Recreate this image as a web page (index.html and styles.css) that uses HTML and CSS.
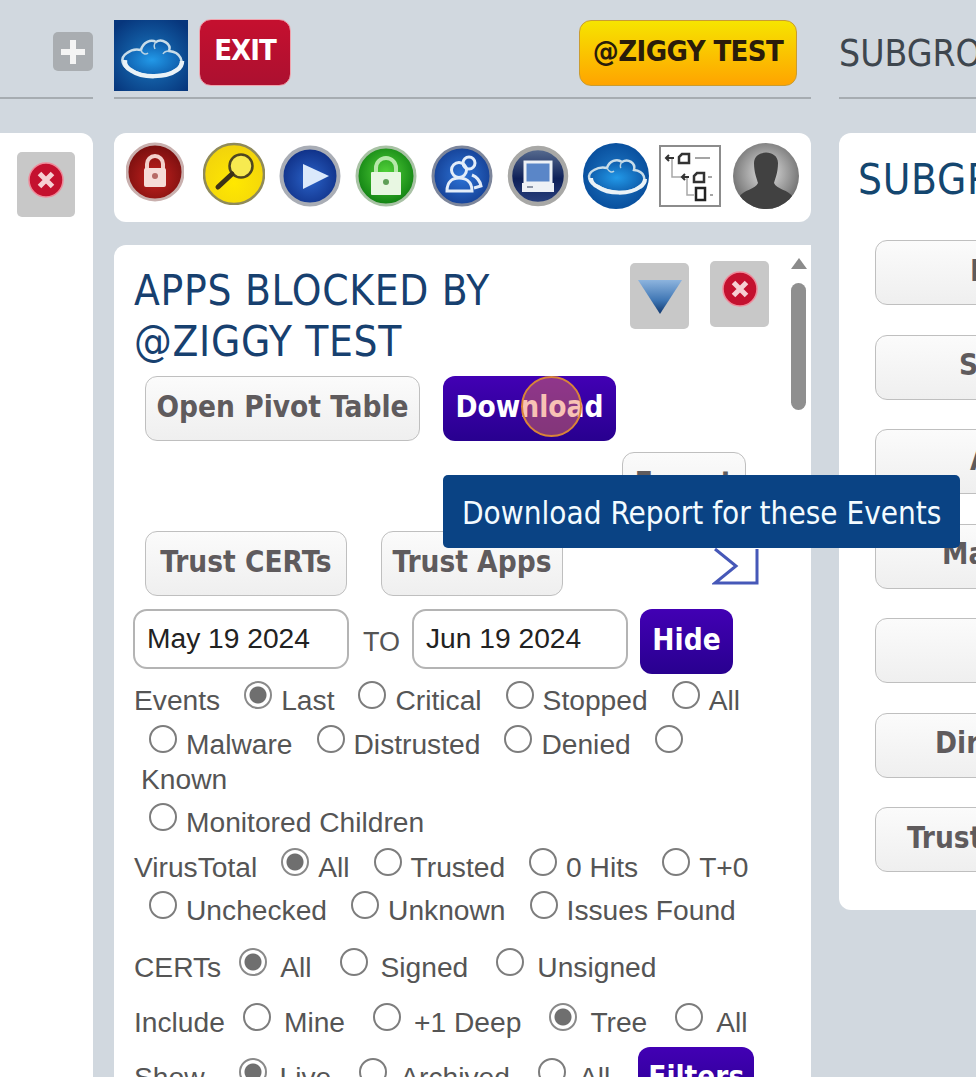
FILE: index.html
```html
<!DOCTYPE html>
<html lang="en">
<head>
  <meta charset="UTF-8">
  <title>Apps blocked</title>
  <link rel="stylesheet" href="styles.css">
</head>
<body>
  <div class="page">

    <div class="col col-left">
      <div class="col-head head-left">
        <div class="plus-btn">
          <svg width="26" height="26" viewBox="0 0 26 26"><path d="M13 1v24M1 13h24" stroke="#f4f4f4" stroke-width="6"/></svg>
        </div>
      </div>
      <div class="card card-left">
        <div class="close-btn">
          <svg width="36" height="36" viewBox="0 0 36 36"><circle cx="18" cy="18" r="17" fill="#c4112f" stroke="#ef8b9b" stroke-width="1.5"/><path d="M11.500 11.500l13 13M24.500 11.500l-13 13" stroke="#f6cfd3" stroke-width="5"/></svg>
        </div>
      </div>
    </div>

    <div class="col col-mid">
      <div class="col-head head-mid">
        <svg class="logo" width="74" height="71" viewBox="0 0 74 71">
          <defs>
            <radialGradient id="logoBg" cx="50%" cy="55%" r="65%"><stop offset="0" stop-color="#1a78c0"/><stop offset="1" stop-color="#07367c"/></radialGradient>
            <radialGradient id="logoCloud" cx="50%" cy="55%" r="50%"><stop offset="0" stop-color="#2299e8"/><stop offset="1" stop-color="#0f5fae"/></radialGradient>
          </defs>
          <rect width="74" height="71" fill="url(#logoBg)"/>
          <path d="M18 50C8 48 5 38 13 33C18 29 23 29 27 30C29 22 37 19 42 22C48 18 58 24 55 31C66 32 72 42 63 49C52 58 28 57 18 50Z" fill="url(#logoCloud)" stroke="#c9dde9" stroke-width="2.500"/>
          <path d="M27 30c1 4 5 5 7 3M42 22c-2 2-2 5-1 7M55 31c-3 0-5 1-6 3" fill="none" stroke="#b9d3e3" stroke-width="1.500"/>
          <path d="M11 40C10 46 14 49 18 51C28 58 52 58 63 50C66 48 68 45 68 41" fill="none" stroke="#eaf2f7" stroke-width="4.500"/>
        </svg>
        <div class="exit-btn">EXIT</div>
        <div class="user-btn">@ZIGGY TEST</div>
      </div>

      <div class="card toolbar">
        <svg class="tool tool-lock" width="58" height="60" viewBox="0 0 58 60">
          <defs><radialGradient id="redBall" cx="50%" cy="60%" r="55%"><stop offset="0" stop-color="#c5211f"/><stop offset="1" stop-color="#7c100f"/></radialGradient></defs>
          <circle cx="29" cy="30" r="28" fill="url(#redBall)" stroke="#c9b0ae" stroke-width="3"/>
          <path d="M21 27v-5a8 8 0 0 1 16 0v5" fill="none" stroke="#f3d0cb" stroke-width="4"/>
          <rect x="18" y="26" width="22" height="19" rx="2" fill="#f6dcd8"/>
          <circle cx="29" cy="34" r="3" fill="#b76a66"/>
        </svg>
        <svg class="tool tool-search" width="62" height="63" viewBox="0 0 62 63">
          <defs><radialGradient id="yellowBall" cx="50%" cy="65%" r="60%"><stop offset="0" stop-color="#ffe800"/><stop offset="1" stop-color="#f2d40c"/></radialGradient></defs>
          <circle cx="31" cy="32" r="30" fill="url(#yellowBall)" stroke="#8f8a5a" stroke-width="2.500"/>
          <circle cx="38" cy="24" r="11.500" fill="#f7ea50" stroke="#4e4620" stroke-width="2.500"/>
          <path d="M29 32L15 45" stroke="#3c3216" stroke-width="5" stroke-linecap="round"/>
        </svg>
        <svg class="tool" width="62" height="62" viewBox="0 0 62 62">
          <defs><radialGradient id="blueBall" cx="50%" cy="55%" r="55%"><stop offset="0" stop-color="#2a62c8"/><stop offset="1" stop-color="#0f2f85"/></radialGradient></defs>
          <circle cx="31" cy="31" r="28.500" fill="url(#blueBall)" stroke="#a9adb5" stroke-width="4"/>
          <path d="M24 19L50 31L24 44Z" fill="#dbe9fb"/>
        </svg>
        <svg class="tool" width="62" height="62" viewBox="0 0 62 62">
          <defs><radialGradient id="greenBall" cx="50%" cy="45%" r="55%"><stop offset="0" stop-color="#53d33a"/><stop offset="1" stop-color="#108012"/></radialGradient></defs>
          <circle cx="31" cy="31" r="29" fill="url(#greenBall)" stroke="#a9c2a5" stroke-width="3"/>
          <path d="M21 28v-5a10 10 0 0 1 20 0v5" fill="none" stroke="#b7e8aa" stroke-width="4"/>
          <rect x="16" y="27" width="30" height="23" rx="1" fill="#e8f7e2"/>
          <circle cx="31" cy="37" r="3" fill="#5f9f58"/>
        </svg>
        <svg class="tool" width="62" height="62" viewBox="0 0 62 62">
          <defs><radialGradient id="peopleBall" cx="50%" cy="50%" r="55%"><stop offset="0" stop-color="#2d74d8"/><stop offset="1" stop-color="#143e92"/></radialGradient></defs>
          <circle cx="31" cy="31" r="29" fill="url(#peopleBall)" stroke="#7d869b" stroke-width="3"/>
          <circle cx="28" cy="25" r="7.500" fill="none" stroke="#e3edf9" stroke-width="3"/>
          <circle cx="38" cy="18" r="6" fill="none" stroke="#e3edf9" stroke-width="3"/>
          <path d="M16 46c0-10 6-13 12-13s13 3 13 13z" fill="none" stroke="#e3edf9" stroke-width="3"/>
          <path d="M41 30c5 2 8 6 9 11l-7 2" fill="none" stroke="#e3edf9" stroke-width="3"/>
        </svg>
        <svg class="tool" width="62" height="62" viewBox="0 0 62 62">
          <defs><linearGradient id="laptopBall" x1="0" y1="0" x2="0" y2="1"><stop offset="0" stop-color="#5b6f92"/><stop offset=".55" stop-color="#0e2058"/><stop offset="1" stop-color="#2b427f"/></linearGradient></defs>
          <circle cx="31" cy="31" r="28" fill="url(#laptopBall)" stroke="#a8a8a6" stroke-width="4.500"/>
          <rect x="18" y="17" width="26" height="21" fill="#5a86c8" stroke="#eef1f6" stroke-width="3"/>
          <path d="M15 38h32v9H15z" fill="#eef1f6"/>
          <path d="M20 42h6" stroke="#8d96a8" stroke-width="2"/>
        </svg>
        <svg class="tool" width="66" height="66" viewBox="0 0 66 66">
          <defs>
            <radialGradient id="cloudBall" cx="50%" cy="50%" r="55%"><stop offset="0" stop-color="#1f7ac8"/><stop offset="1" stop-color="#074c9a"/></radialGradient>
            <radialGradient id="cloudFill" cx="50%" cy="55%" r="50%"><stop offset="0" stop-color="#2299e8"/><stop offset="1" stop-color="#0f5fae"/></radialGradient>
          </defs>
          <circle cx="33" cy="33" r="33" fill="url(#cloudBall)"/>
          <path d="M15 43C5 41 3 31 11 27C16 24 20 24 24 25C26 18 34 15 39 19C45 15 53 20 51 27C61 28 65 37 57 43C46 52 25 50 15 43Z" fill="url(#cloudFill)" stroke="#c9dde9" stroke-width="2.500"/>
          <path d="M24 25c2 4 5 5 7 3M39 19c-2 2-2 5-1 6" fill="none" stroke="#b9d3e3" stroke-width="1.500"/>
          <path d="M8 35C8 40 11 42 15 44C25 51 46 52 57 44C60 42 62 39 62 36" fill="none" stroke="#eaf2f7" stroke-width="4"/>
        </svg>
        <svg class="tool tool-tree" width="62" height="62" viewBox="0 0 62 62">
          <rect x="1" y="1" width="60" height="60" fill="#fff" stroke="#8c8c8c" stroke-width="2"/>
          <path d="M13 13v19h10M28 32v18h7" fill="none" stroke="#a8a8a8" stroke-width="1.500"/>
          <path d="M7 13h8M10 10l-3 3 3 3M23 32h7M26 29l-3 3 3 3" fill="none" stroke="#333" stroke-width="2"/>
          <path d="M20 18v-6l3-3h7v9zM35 37v-6l3-3h7v9z" fill="#fff" stroke="#333" stroke-width="2.500"/>
          <rect x="37" y="43" width="9" height="12" fill="#fff" stroke="#222" stroke-width="2.500"/>
          <path d="M36 13h15M49 32h4M51 50h3" stroke="#888" stroke-width="1.500"/>
        </svg>
        <svg class="tool tool-avatar" width="66" height="66" viewBox="0 0 66 66">
          <defs>
            <radialGradient id="avatarBall" cx="50%" cy="45%" r="55%"><stop offset="0" stop-color="#e4e4e4"/><stop offset="1" stop-color="#6f6f6f"/></radialGradient>
            <clipPath id="avatarClip"><circle cx="33" cy="33" r="33"/></clipPath>
          </defs>
          <circle cx="33" cy="33" r="33" fill="url(#avatarBall)"/>
          <path clip-path="url(#avatarClip)" d="M21 20C21 6 45 6 45 20C45 30 42 36 41 40C43 46 56 47 60 54L60 66H6L6 54C10 47 23 46 25 40C24 36 21 30 21 20Z" fill="#414141"/>
        </svg>
      </div>

      <div class="card panel">
        <div class="panel-head">
          <h2 class="panel-title">APPS BLOCKED BY @ZIGGY TEST</h2>
          <div class="square-btn square-sort">
            <svg width="46" height="38" viewBox="0 0 46 38">
              <defs><linearGradient id="sortFill" x1="0" y1="0" x2="0" y2="1"><stop offset="0" stop-color="#8db4de"/><stop offset=".6" stop-color="#3f76b4"/><stop offset="1" stop-color="#10386f"/></linearGradient></defs>
              <path d="M1 3H45L23 37Z" fill="url(#sortFill)"/>
            </svg>
          </div>
          <div class="square-btn square-close">
            <svg width="36" height="36" viewBox="0 0 36 36"><circle cx="18" cy="18" r="17" fill="#c4112f" stroke="#ef8b9b" stroke-width="1.500"/><path d="M11.500 11.500l13 13M24.500 11.500l-13 13" stroke="#f6cfd3" stroke-width="5"/></svg>
          </div>
        </div>

        <div class="btn-row">
          <div class="btn btn-pivot">Open Pivot Table</div>
          <div class="btn btn-purple btn-download">Download</div>
        </div>
        <div class="btn-row btn-row-export">
          <div class="btn btn-export">Export</div>
        </div>
        <div class="btn-row btn-row-trust">
          <div class="btn btn-certs">Trust CERTs</div>
          <div class="btn btn-apps">Trust Apps</div>
          <svg class="sigma" width="48" height="40" viewBox="0 0 48 40"><path d="M45 2V36H3L24 19L3 2" fill="none" stroke="#4658b8" stroke-width="3"/></svg>
        </div>

        <div class="date-row">
          <div class="date-box">May 19 2024</div>
          <span class="date-to">TO</span>
          <div class="date-box">Jun 19 2024</div>
          <div class="btn btn-purple btn-hide">Hide</div>
        </div>

        <div class="row">
          <span class="row-label">Events</span>
          <label class="opt"><i class="radio on"></i>Last</label>
          <label class="opt"><i class="radio"></i>Critical</label>
          <label class="opt"><i class="radio"></i>Stopped</label>
          <label class="opt"><i class="radio"></i>All</label>
        </div>
        <div class="row row-indent">
          <label class="opt"><i class="radio"></i>Malware</label>
          <label class="opt"><i class="radio"></i>Distrusted</label>
          <label class="opt"><i class="radio"></i>Denied</label>
          <label class="opt"><i class="radio"></i></label>
        </div>
        <div class="row-known">Known</div>
        <div class="row row-indent row-monitored">
          <label class="opt"><i class="radio"></i>Monitored Children</label>
        </div>
        <div class="row row-vt">
          <span class="row-label">VirusTotal</span>
          <label class="opt"><i class="radio on"></i>All</label>
          <label class="opt"><i class="radio"></i>Trusted</label>
          <label class="opt"><i class="radio"></i>0 Hits</label>
          <label class="opt"><i class="radio"></i>T+0</label>
        </div>
        <div class="row row-indent row-vt2">
          <label class="opt"><i class="radio"></i>Unchecked</label>
          <label class="opt"><i class="radio"></i>Unknown</label>
          <label class="opt"><i class="radio"></i>Issues Found</label>
        </div>
        <div class="row row-wide row-certs">
          <span class="row-label">CERTs</span>
          <label class="opt"><i class="radio on"></i>All</label>
          <label class="opt"><i class="radio"></i>Signed</label>
          <label class="opt"><i class="radio"></i>Unsigned</label>
        </div>
        <div class="row row-wide row-include">
          <span class="row-label">Include</span>
          <label class="opt"><i class="radio"></i>Mine</label>
          <label class="opt"><i class="radio"></i>+1 Deep</label>
          <label class="opt"><i class="radio on"></i>Tree</label>
          <label class="opt"><i class="radio"></i>All</label>
        </div>
        <div class="row row-wide row-show">
          <span class="row-label">Show</span>
          <label class="opt"><i class="radio on"></i>Live</label>
          <label class="opt"><i class="radio"></i>Archived</label>
          <label class="opt"><i class="radio"></i>All</label>
          <div class="btn btn-purple btn-filters">Filters</div>
        </div>

        <div class="scroll-arrow"></div>
        <div class="scroll-thumb"></div>
      </div>
    </div>

    <div class="col col-right">
      <div class="col-head head-right">SUBGROUPS</div>
      <div class="card card-right">
        <h2 class="right-title">SUBGROUPS</h2>
        <div class="btn side-btn side-1">L</div>
        <div class="btn side-btn side-2">S</div>
        <div class="btn side-btn side-1">A</div>
        <div class="btn side-btn side-4">Ma</div>
        <div class="btn side-btn"></div>
        <div class="btn side-btn side-6">Dir</div>
        <div class="btn side-btn side-7">Trust</div>
      </div>
    </div>
  </div>

  <div class="tooltip">Download Report for these Events</div>
  <div class="click-mark"></div>
</body>
</html>
```

FILE: styles.css
```css
* {
  padding: 0;
  margin: 0;
  box-sizing: border-box;
}
html,
body {
  height: 1077px;
  overflow: hidden;
}
body {
  position: relative;
  background-color: #d1d8df;
  font-family: "Liberation Sans", Arial, sans-serif;
  font-size: 28.2px;
  color: #555;
}
.page {
  display: flex;
  width: 1300px;
}
.col-left {
  width: 93px;
  margin-right: 21px;
}
.col-mid {
  width: 697px;
  margin-right: 28px;
}
.col-right {
  width: 400px;
}
.col-head {
  height: 99px;
  border-bottom: 2px solid #a6acb1;
  margin-bottom: 34px;
}
.card {
  background-color: #fff;
}

/* top bars */
.head-left {
  display: flex;
  justify-content: flex-end;
  padding-top: 32px;
}
.plus-btn {
  display: flex;
  align-items: center;
  justify-content: center;
  width: 40px;
  height: 39px;
  background-color: #a9adb1;
  border-radius: 5px;
}
.head-mid {
  display: flex;
  align-items: flex-start;
  padding-top: 20px;
}
.exit-btn {
  display: flex;
  align-items: center;
  justify-content: center;
  width: 92px;
  height: 67px;
  margin: -1px 0 0 11px;
  padding-bottom: 5px;
  border: 1px solid #f0a3ad;
  border-radius: 12px;
  background: linear-gradient(#c5102f, #ac1030);
  color: #fff;
  font: bold 29px "DejaVu Sans Condensed", "DejaVu Sans", sans-serif;
  letter-spacing: -1px;
}
.user-btn {
  display: flex;
  align-items: center;
  justify-content: center;
  width: 218px;
  height: 66px;
  margin-left: auto;
  margin-right: 14px;
  padding-bottom: 4px;
  border: 1px solid #c99c32;
  border-radius: 12px;
  background: linear-gradient(#f6e400, #ffa400);
  color: #2a1c0a;
  font: bold 29px "DejaVu Sans Condensed", "DejaVu Sans", sans-serif;
  letter-spacing: -0.6px;
}
.head-right {
  padding-top: 30px;
  color: #3e464e;
  font: 37px/48px "DejaVu Sans Condensed", "DejaVu Sans", sans-serif;
  margin-bottom: 34px;
}

/* left card */
.card-left {
  height: 944px;
  border-radius: 0 12px 0 0;
  padding: 19px 0 0 17px;
}
.close-btn {
  display: flex;
  align-items: center;
  justify-content: center;
  width: 58px;
  height: 65px;
  background-color: #c8c8c8;
  border-radius: 5px;
  padding-bottom: 9px;
}

/* icon toolbar */
.toolbar {
  display: flex;
  align-items: center;
  gap: 14px;
  height: 89px;
  padding: 0 0 3px 12px;
  border-radius: 12px;
  margin-bottom: 23px;
}
.tool {
  flex-shrink: 0;
}
.tool-lock {
  margin-right: 5px;
  margin-bottom: 8px;
}
.tool-search {
  margin-bottom: 6px;
}
.tool-tree {
  margin-left: -4px;
}
.tool-avatar {
  margin-left: -2px;
}

/* main panel */
.panel {
  position: relative;
  height: 832px;
  overflow: hidden;
  border-radius: 12px 0 0 0;
  padding-left: 20px;
}
.panel-head {
  display: flex;
  align-items: flex-start;
}
.panel-title {
  width: 496px;
  padding: 20px 120px 0 0;
  color: #17406f;
  font: normal 42px/51px "DejaVu Sans Condensed", "DejaVu Sans", sans-serif;
  letter-spacing: 0.7px;
}
.square-btn {
  display: flex;
  align-items: center;
  justify-content: center;
  width: 59px;
  height: 66px;
  background-color: #c8c8c8;
  border-radius: 5px;
}
.square-sort {
  margin-top: 18px;
}
.square-close {
  margin: 16px 0 0 21px;
  padding-bottom: 10px;
}
.btn {
  display: flex;
  align-items: center;
  justify-content: center;
  height: 65px;
  padding-bottom: 4px;
  border: 1.5px solid #bfbfbf;
  border-radius: 12px;
  background: linear-gradient(#fbfbfb, #efefef);
  color: #5f5b5d;
  font: bold 29.500px "DejaVu Sans Condensed", "DejaVu Sans", sans-serif;
}
.btn-purple {
  border: 0;
  background: linear-gradient(#4200b4, #28008f);
  color: #fff;
}
.btn-row {
  display: flex;
  padding-left: 11px;
}
.panel-head + .btn-row {
  margin-top: 9px;
}
.btn-pivot {
  width: 275px;
}
.btn-download {
  width: 173px;
  margin-left: 23px;
}
.btn-row-export {
  margin-top: 11px;
  padding-left: 488px;
}
.btn-export {
  width: 124px;
}
.btn-row-trust {
  margin-top: 14px;
  position: relative;
}
.btn-certs {
  width: 202px;
}
.btn-apps {
  width: 182px;
  margin-left: 34px;
}
.sigma {
  margin: 16px 0 0 149px;
}
.date-row {
  display: flex;
  align-items: flex-start;
  margin: 13px 0 0 -1px;
  height: 69px;
}
.date-box {
  width: 216px;
  height: 60px;
  padding: 12px 0 0 12px;
  border: 2px solid #b4b4b4;
  border-radius: 14px;
  color: #222;
  line-height: 30px;
}
.date-to {
  width: 63px;
  padding: 18px 0 0 14px;
  line-height: 30px;
  font-size: 27px;
}
.btn-hide {
  width: 93px;
  margin-left: 12px;
}

/* radio rows */
.row {
  display: flex;
  align-items: center;
  gap: 24px;
  height: 44px;
}
.row-indent {
  padding-left: 15px;
}
.row-known {
  height: 26px;
  padding-left: 7px;
  line-height: 26px;
}
.row-monitored {
  margin-top: 8px;
}
.row-vt {
  margin-top: 1px;
}
.row-vt2 {
  margin-top: -1px;
}
.row-certs {
  margin-top: 13px;
}
.row-include,
.row-show {
  margin-top: 11px;
}
.row-indent + .row-indent {
  margin-top: 1px;
}
.opt {
  display: flex;
  align-items: center;
  gap: 9px;
}
.row-wide {
  gap: 28px;
}
.row-wide .opt {
  gap: 13px;
}
.row-wide .row-label {
  margin-right: -10px;
}
.row-show .row-label {
  margin-right: 6px;
}
.radio {
  display: block;
  flex-shrink: 0;
  width: 28px;
  height: 28px;
  margin-top: -11px;
  border: 2px solid #7d7d7d;
  border-radius: 50%;
  background-color: #fff;
}
.radio.on {
  border-color: #8a8a8a;
  background: radial-gradient(circle, #6f6f6f 0 8px, #fff 9px);
}
.row-show .btn-filters {
  width: 116px;
  margin: 4px 0 0 0;
  flex-shrink: 0;
}

/* fake scrollbar */
.scroll-arrow {
  position: absolute;
  top: 13px;
  left: 677px;
  border-left: 8px solid transparent;
  border-right: 8px solid transparent;
  border-bottom: 11px solid #8b8b8b;
}
.scroll-thumb {
  position: absolute;
  top: 38px;
  left: 677px;
  width: 15px;
  height: 127px;
  background-color: #8f8f8f;
  border-radius: 8px;
}

/* right card */
.card-right {
  height: 777px;
  padding: 19px 0 0 36px;
  border-radius: 12px 0 0 12px;
}
.right-title {
  height: 88px;
  margin-left: -17px;
  color: #14466f;
  font: normal 42px/55px "DejaVu Sans Condensed", "DejaVu Sans", sans-serif;
  letter-spacing: 0.7px;
}
.side-btn {
  justify-content: flex-start;
  width: 364px;
  margin-bottom: 29.500px;
}
.side-1 {
  padding-left: 94px;
}
.side-2 {
  padding-left: 83px;
}
.side-4 {
  padding-left: 66px;
}
.side-6 {
  padding-left: 59px;
}
.side-7 {
  padding-left: 31px;
}

/* overlays */
.tooltip {
  position: absolute;
  left: 443px;
  top: 475px;
  width: 517px;
  height: 73px;
  padding-left: 19px;
  background-color: #0a4384;
  border-radius: 5px;
  color: #f3fbff;
  font: 31.200px/76px "DejaVu Sans Condensed", "DejaVu Sans", sans-serif;
  white-space: nowrap;
}
.click-mark {
  position: absolute;
  left: 521px;
  top: 376px;
  width: 61px;
  height: 61px;
  border: 2px solid #d98438;
  border-radius: 50%;
  background-color: rgba(240, 120, 90, 0.45);
}
```
